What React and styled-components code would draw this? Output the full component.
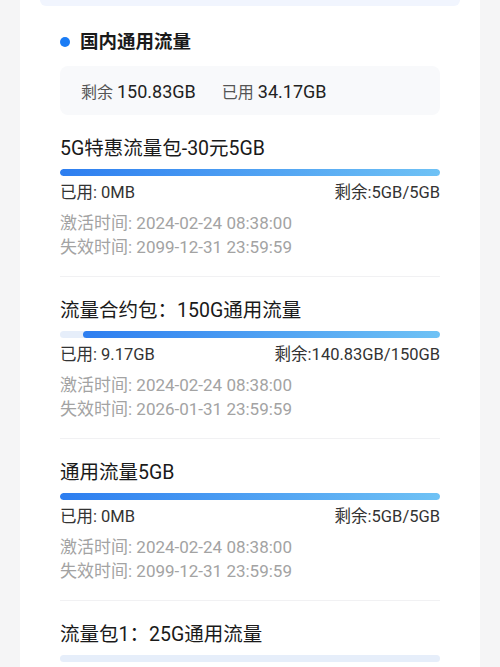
import React from "react";
import styled, { createGlobalStyle } from "styled-components";

const GlobalStyle = createGlobalStyle`
  html, body {
    margin: 0;
    padding: 0;
    background: #f5f5f6;
    font-family: Roboto, "Noto Sans CJK SC", sans-serif;
  }
`;

export default function App() {
  const packages = [
    {
      title: "5G特惠流量包-30元5GB",
      used: "0MB",
      left: "5GB/5GB",
      ratio: 1,
      start: "2024-02-24 08:38:00",
      end: "2099-12-31 23:59:59",
    },
    {
      title: "流量合约包：150G通用流量",
      used: "9.17GB",
      left: "140.83GB/150GB",
      ratio: 140.83 / 150,
      start: "2024-02-24 08:38:00",
      end: "2026-01-31 23:59:59",
    },
    {
      title: "通用流量5GB",
      used: "0MB",
      left: "5GB/5GB",
      ratio: 1,
      start: "2024-02-24 08:38:00",
      end: "2099-12-31 23:59:59",
    },
    {
      title: "流量包1：25G通用流量",
      used: "25GB",
      left: "0GB/25GB",
      ratio: 0,
      start: "2024-02-24 08:38:00",
      end: "2099-12-31 23:59:59",
    },
  ];

  return (
    <Page>
      <GlobalStyle />
      <Card>
        <TopBox />
        <Header>
          <Dot />
          <h2>国内通用流量</h2>
        </Header>
        <Summary>
          <span>
            剩余 <b>150.83GB</b>
          </span>
          <span>
            已用 <b>34.17GB</b>
          </span>
        </Summary>
        {packages.map((p) => (
          <Package key={p.title}>
            <Title>{p.title}</Title>
            <Track>
              <Fill style={{ width: `${p.ratio * 100}%` }} />
            </Track>
            <UsageRow>
              <span>已用: {p.used}</span>
              <span>剩余:{p.left}</span>
            </UsageRow>
            <Dates>
              <div>激活时间: {p.start}</div>
              <div>失效时间: {p.end}</div>
            </Dates>
          </Package>
        ))}
      </Card>
    </Page>
  );
}

const Page = styled.div`
  height: 667px;
  overflow: hidden;
  padding: 0 20px;
`;

const Card = styled.div`
  background: #fff;
  padding: 0 40px;
  min-height: 667px;
`;

const TopBox = styled.div`
  height: 6px;
  margin: 0 -20px;
  background: #f1f5fe;
  border-radius: 0 0 12px 12px;
`;

const Header = styled.div`
  display: flex;
  align-items: center;
  gap: 10px;
  margin-top: 24px;
  height: 24px;
  h2 {
    margin: 0;
    font-size: 18.5px;
    font-weight: 600;
    color: #1a1a1a;
    line-height: 24px;
  }
`;

const Dot = styled.span`
  width: 10px;
  height: 10px;
  border-radius: 50%;
  background: #1a7cf5;
`;

const Summary = styled.div`
  margin-top: 12px;
  height: 49px;
  box-sizing: border-box;
  padding: 0 21px;
  display: flex;
  align-items: center;
  gap: 26px;
  background: #f8f9fb;
  border-radius: 8px;
  font-size: 16px;
  color: #555;
  b {
    font-weight: 400;
    font-size: 18px;
    color: #222;
  }
`;

const Package = styled.div`
  padding: 22px 0 17px;
  border-bottom: 1px solid #f1f1f3;
`;

const Title = styled.div`
  font-size: 19.5px;
  line-height: 24px;
  color: #1a1a1a;
`;

const Track = styled.div`
  margin-top: 8px;
  height: 7px;
  border-radius: 4px;
  background: #e6eefa;
  display: flex;
  justify-content: flex-end;
  overflow: hidden;
`;

const Fill = styled.div`
  height: 100%;
  border-radius: 4px;
  background: linear-gradient(90deg, #2d7ef0, #6fc2f5);
`;

const UsageRow = styled.div`
  margin-top: 6px;
  display: flex;
  justify-content: space-between;
  font-size: 16.5px;
  line-height: 22px;
  color: #333;
`;

const Dates = styled.div`
  margin-top: 7px;
  font-size: 17px;
  line-height: 24px;
  color: #a3a3a3;
`;
